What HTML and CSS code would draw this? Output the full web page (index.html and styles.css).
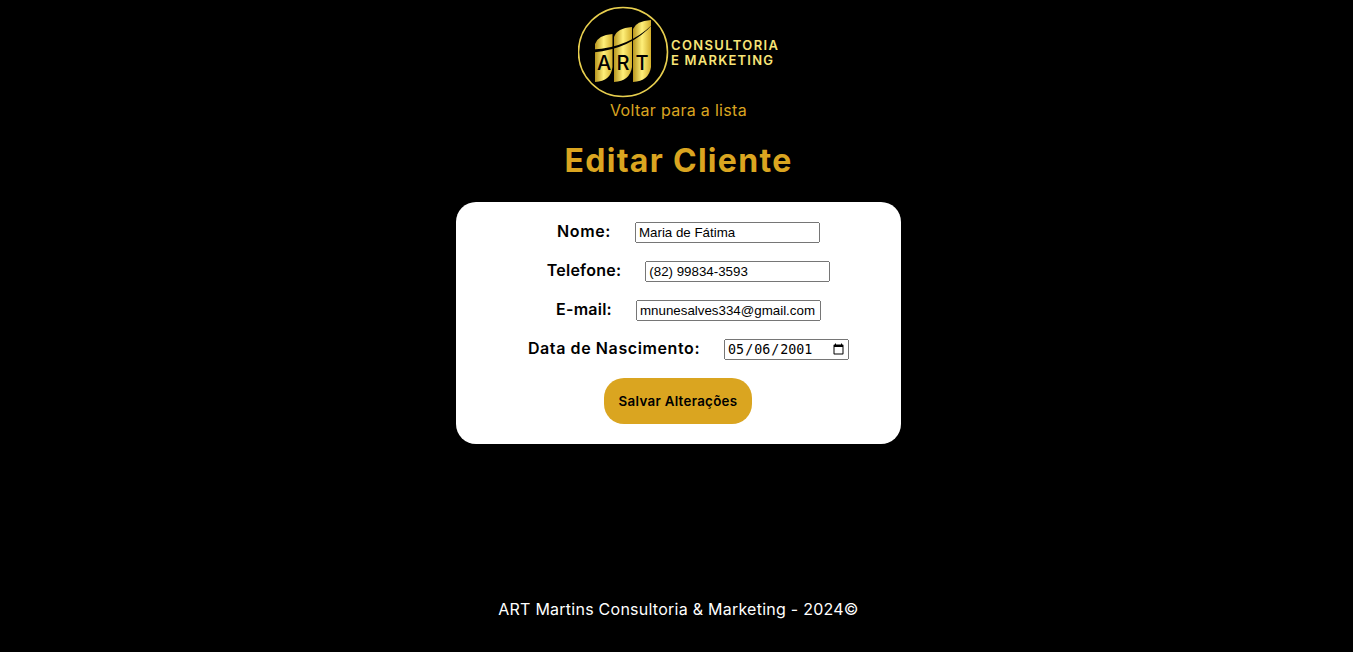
FILE: index.html
```html
<!DOCTYPE html>
<html lang="pt-BR">
<head>
    <meta charset="UTF-8">
    <meta name="viewport" content="width=device-width, initial-scale=1.0">
    <title>Editar Cliente</title>
    <link rel="stylesheet" href="styles.css">
</head>
<body>
    <header class="topo">
        <svg class="logo" width="200" height="92" viewBox="0 0 200 92" role="img" aria-label="ART Consultoria e Marketing">
            <defs>
                <linearGradient id="ouro" x1="0" y1="0" x2="1" y2="0">
                    <stop offset="0" stop-color="#b8961f"/>
                    <stop offset="0.5" stop-color="#fff07a"/>
                    <stop offset="1" stop-color="#d3ae2b"/>
                </linearGradient>
            </defs>
            <circle cx="45" cy="46" r="44.5" fill="none" stroke="#e8cf4f" stroke-width="1.6"/>
            <path d="M17 38Q20 29 34.500 28V61Q33 75 17 76Z" fill="url(#ouro)"/>
            <path d="M36 31Q39 22 54 21V61Q52 75 36 76Z" fill="url(#ouro)"/>
            <path d="M55 23Q58 15 73 14V61Q71 75 55 76Z" fill="url(#ouro)"/>
            <path d="M15 43.500Q50 42 75 18Q53 43 15 46.500Z" fill="#000"/>
            <text class="logo-art" x="26" y="64">A</text>
            <text class="logo-art" x="45" y="64">R</text>
            <text class="logo-art" x="64" y="64">T</text>
            <text class="logo-nome" x="93" y="44" textLength="107">CONSULTORIA</text>
            <text class="logo-nome" x="93" y="59" textLength="102">E MARKETING</text>
        </svg>
        <a class="voltar" href="#">Voltar para a lista</a>
    </header>

    <h1>Editar Cliente</h1>

    <form class="form-cliente">
        <div class="campo">
            <label for="nome">Nome:</label>
            <input type="text" id="nome" value="Maria de Fátima">
        </div>
        <div class="campo">
            <label class="rotulo-justo" for="telefone">Telefone:</label>
            <input type="text" id="telefone" value="(82) 99834-3593">
        </div>
        <div class="campo">
            <label class="rotulo-justo" for="email">E-mail:</label>
            <input type="email" id="email" value="mnunesalves334@gmail.com">
        </div>
        <div class="campo">
            <label for="nascimento">Data de Nascimento:</label>
            <input type="date" id="nascimento" value="2001-05-06">
        </div>
        <button type="button" class="salvar">Salvar Alterações</button>
    </form>

    <footer class="rodape">ART Martins Consultoria &amp; Marketing - 2024©</footer>
</body>
</html>
```

FILE: styles.css
```css
* { box-sizing: border-box;
}

body {
    font-family: 'Inter', 'Liberation Sans', sans-serif;
    display: flex;
    flex-direction: column;
    align-items: center;
    height: 100vh;
    margin: 0;
    padding: 6px 0 0 4px;
    background: #000;
    color: #000;
}
.topo {
    display: flex;
    flex-direction: column;
    align-items: center;
}
.logo {
    display: block;
    margin-right: 1px;
}
.logo-art {
    font-family: 'Inter', sans-serif;
    font-size: 20px;
    font-weight: 500;
    text-anchor: middle;
    fill: #000;
}
.logo-nome {
    font-family: 'Inter', sans-serif;
    font-size: 13px;
    font-weight: 600;
    fill: #f7e477;
}
.voltar {
    margin-top: 2px;
    font-size: 16px;
    line-height: 20px;
    letter-spacing: 0.3px;
    color: #daa520;
    text-decoration: none;
}
h1 {
    margin: 21px 0 21px;
    font-size: 32px;
    line-height: 40px;
    font-weight: 700;
    letter-spacing: 1.3px;
    color: #daa520;
}
.form-cliente {
    display: flex;
    flex-direction: column;
    align-items: center;
    width: 445px;
    padding: 20px 0;
    background: #fff;
    border-radius: 20px;
}
.campo {
    display: flex;
    align-items: center;
    gap: 24px;
    height: 21px;
    margin-bottom: 18px;
    padding-left: 20px;
}
.campo label {
    font-size: 16px;
    font-weight: 600;
    letter-spacing: 0.6px;
    position: relative;
    top: -2px;
}
.campo .rotulo-justo {
    letter-spacing: 0.25px;
}
.campo input {
    width: 185px;
    flex: none;
}
.campo input[type="date"] {
    width: 125px;
}
.salvar {
    width: 148px;
    height: 46px;
    margin-right: 1px;
    padding: 0;
    font-family: inherit;
    font-size: 13.333px;
    font-weight: 600;
    letter-spacing: 0.3px;
    color: #000;
    background: #daa520;
    border: none;
    border-radius: 20px;
    cursor: pointer;
}
.rodape {
    margin-top: auto;
    margin-bottom: 33px;
    font-size: 16px;
    line-height: 20px;
    letter-spacing: 0.25px;
    color: #fff;
}
```
